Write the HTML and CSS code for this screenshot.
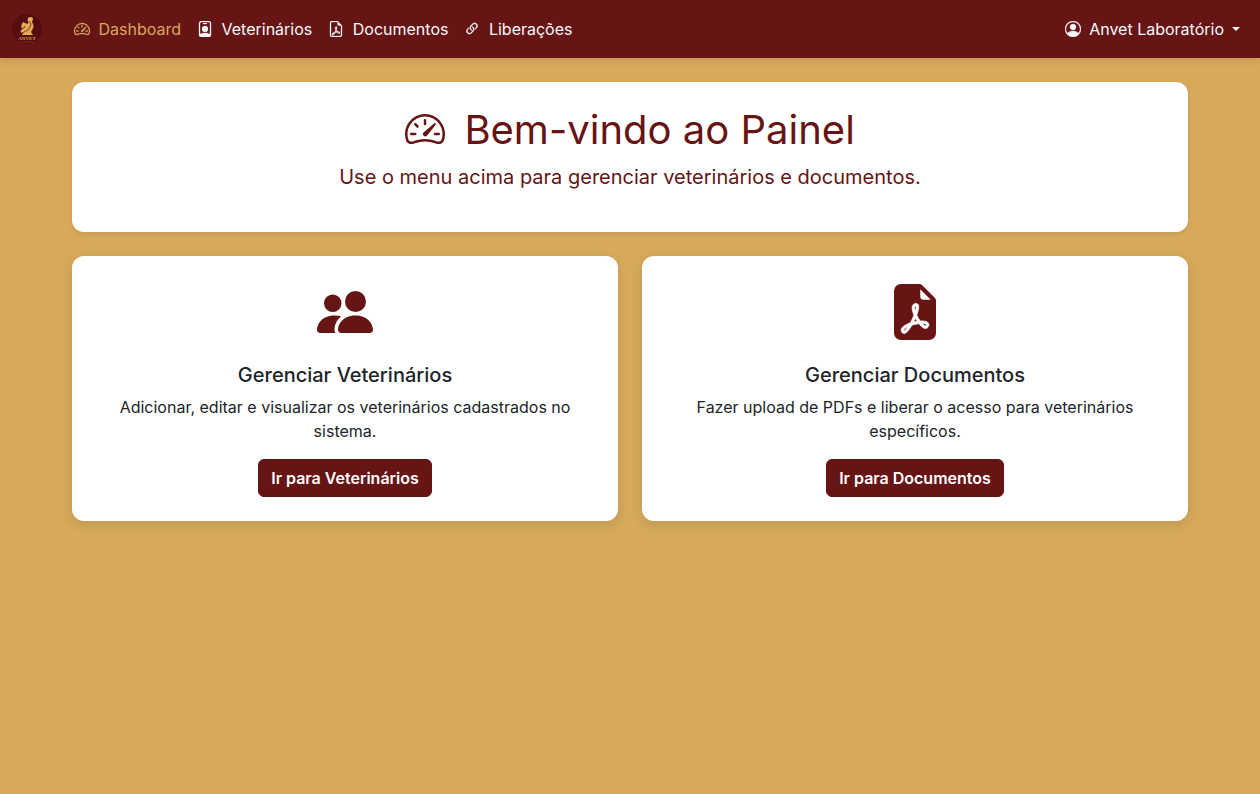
FILE: index.html
```
<!DOCTYPE html>
<html lang="pt-BR">
<head>
  <meta charset="UTF-8">
  <title>Painel – Anvet Laboratório</title>
  <meta name="viewport" content="width=device-width, initial-scale=1.0">
  <link rel="stylesheet" href="styles.css">
</head>
<body>

  <!-- icons -->
  <svg class="icon-defs" aria-hidden="true">
    <symbol id="speedometer" viewBox="0 0 16 16">
      <path d="M8 4a.5.5 0 0 1 .5.5V6a.5.5 0 0 1-1 0V4.5A.5.5 0 0 1 8 4M3.732 5.732a.5.5 0 0 1 .707 0l.915.914a.5.5 0 1 1-.708.708l-.914-.915a.5.5 0 0 1 0-.707M2 10a.5.5 0 0 1 .5-.5h1.586a.5.5 0 0 1 0 1H2.5A.5.5 0 0 1 2 10m9.5 0a.5.5 0 0 1 .5-.5h1.5a.5.5 0 0 1 0 1H12a.5.5 0 0 1-.5-.5m.754-4.246a.39.39 0 0 0-.527-.02L7.547 9.31a.91.91 0 1 0 1.302 1.258l3.434-4.297a.39.39 0 0 0-.029-.518z"/>
      <path fill-rule="evenodd" d="M0 10a8 8 0 1 1 15.547 2.661c-.442 1.253-1.845 1.602-2.932 1.25C11.309 13.488 9.475 13 8 13c-1.474 0-3.31.488-4.615.911-1.087.352-2.49.003-2.932-1.25A8 8 0 0 1 0 10m8-7a7 7 0 0 0-6.603 9.329c.203.575.923.876 1.68.63C4.397 12.533 6.358 12 8 12s3.604.532 4.923.96c.757.245 1.477-.056 1.68-.631A7 7 0 0 0 8 3"/>
    </symbol>
    <symbol id="badge" viewBox="0 0 16 16">
      <path d="M6.5 2a.5.5 0 0 0 0 1h3a.5.5 0 0 0 0-1zM11 8a3 3 0 1 1-6 0 3 3 0 0 1 6 0"/>
      <path d="M4.5 0A2.5 2.5 0 0 0 2 2.5V14a2 2 0 0 0 2 2h8a2 2 0 0 0 2-2V2.5A2.5 2.5 0 0 0 11.5 0zM3 2.5A1.5 1.5 0 0 1 4.5 1h7A1.5 1.5 0 0 1 13 2.5v10.795a4.2 4.2 0 0 0-.776-.492C11.392 12.387 10.063 12 8 12s-3.392.387-4.224.803a4.2 4.2 0 0 0-.776.492z"/>
    </symbol>
    <symbol id="pdf-mark" viewBox="0 0 16 16">
      <path d="M4.603 14.087a.8.8 0 0 1-.438-.42c-.195-.388-.13-.776.08-1.102.198-.307.526-.568.897-.787a7.7 7.7 0 0 1 1.482-.645 20 20 0 0 0 1.062-2.227 7.3 7.3 0 0 1-.43-1.295c-.086-.4-.119-.796-.046-1.136.075-.354.274-.672.65-.823.192-.077.4-.12.602-.077a.7.7 0 0 1 .477.365c.088.164.12.356.127.538.007.188-.012.396-.047.614-.084.51-.27 1.134-.52 1.794a11 11 0 0 0 .98 1.686 5.8 5.8 0 0 1 1.334.05c.364.066.734.195.96.465.12.144.193.32.2.518.007.192-.047.382-.138.563a1.04 1.04 0 0 1-.354.416.86.86 0 0 1-.51.138c-.331-.014-.654-.196-.933-.417a5.7 5.7 0 0 1-.911-.95 11.7 11.7 0 0 0-1.997.406 11.3 11.3 0 0 1-1.02 1.51c-.292.35-.609.656-.927.787a.8.8 0 0 1-.58.029m1.379-1.901q-.25.115-.459.238c-.328.194-.541.383-.647.547-.094.145-.096.25-.04.361q.016.032.026.044l.035-.012c.137-.056.355-.235.635-.572a8 8 0 0 0 .45-.606m1.64-1.33a13 13 0 0 1 1.01-.193 12 12 0 0 1-.51-.858 21 21 0 0 1-.5 1.05zm2.446.45q.226.245.435.41c.24.19.407.253.498.256a.1.1 0 0 0 .07-.015.3.3 0 0 0 .094-.125.44.44 0 0 0 .059-.2.1.1 0 0 0-.026-.063c-.052-.062-.2-.152-.518-.209a4 4 0 0 0-.612-.053zM8.078 7.8a7 7 0 0 0 .2-.828q.046-.282.038-.465a.6.6 0 0 0-.032-.198.5.5 0 0 0-.145.04c-.087.035-.158.106-.196.283-.04.192-.03.469.046.822q.036.167.09.346z"/>
    </symbol>
    <symbol id="file-pdf" viewBox="0 0 16 16">
      <path d="M14 14V4.5L9.5 0H4a2 2 0 0 0-2 2v12a2 2 0 0 0 2 2h8a2 2 0 0 0 2-2M9.5 3A1.5 1.5 0 0 0 11 4.5h2V14a1 1 0 0 1-1 1H4a1 1 0 0 1-1-1V2a1 1 0 0 1 1-1h5.5z"/>
      <use href="#pdf-mark"/>
    </symbol>
    <symbol id="file-pdf-fill" viewBox="0 0 16 16">
      <path fill-rule="evenodd" d="M4 0h5.293A1 1 0 0 1 10 .293L13.707 4a1 1 0 0 1 .293.707V14a2 2 0 0 1-2 2H4a2 2 0 0 1-2-2V2a2 2 0 0 1 2-2m5.5 1.500v2a1 1 0 0 0 1 1h2z"/>
      <use href="#pdf-mark" fill="#fff" stroke="#fff" stroke-width=".2"/>
    </symbol>
    <symbol id="link" viewBox="0 0 16 16">
      <path d="M4.715 6.542 3.343 7.914a3 3 0 1 0 4.243 4.243l1.828-1.829A3 3 0 0 0 8.586 5.500L8 6.086a1 1 0 0 0-.154.199 2 2 0 0 1 .861 3.337L6.88 11.450a2 2 0 1 1-2.830-2.830l.793-.792a4 4 0 0 1-.128-1.287z"/>
      <path d="M6.586 4.672A3 3 0 0 0 7.414 9.500l.775-.776a2 2 0 0 1-.896-3.346L9.120 3.550a2 2 0 1 1 2.830 2.830l-.793.792c.112.420.155.855.128 1.287l1.372-1.372a3 3 0 1 0-4.243-4.243z"/>
    </symbol>
    <symbol id="person" viewBox="0 0 16 16">
      <path d="M11 6a3 3 0 1 1-6 0 3 3 0 0 1 6 0"/>
      <path fill-rule="evenodd" d="M0 8a8 8 0 1 1 16 0A8 8 0 0 1 0 8m8-7a7 7 0 0 0-5.468 11.370C3.242 11.226 4.805 10 8 10s4.757 1.225 5.468 2.370A7 7 0 0 0 8 1"/>
    </symbol>
    <symbol id="people" viewBox="0 0 16 16">
      <path d="M7 14s-1 0-1-1 1-4 5-4 5 3 5 4-1 1-1 1zm4-6a3 3 0 1 0 0-6 3 3 0 0 0 0 6m-5.784 6A2.240 2.240 0 0 1 5 13c0-1.355.68-2.750 1.936-3.720A6.300 6.300 0 0 0 5 9c-4 0-5 3-5 4s1 1 1 1zM4.500 8a2.500 2.500 0 1 0 0-5 2.500 2.500 0 0 0 0 5"/>
    </symbol>
  </svg>

  <nav class="navbar">
    <a class="brand" href="#" aria-label="Anvet">
      <svg class="logo" viewBox="0 0 30 30">
        <circle cx="15" cy="15" r="15" fill="#560d12"/>
        <path fill="#e3ac55" d="M16 4c2-2 5-1 5 1 0 1-1 2-1 3 2 3 2 6 0 8l-1 2 2 3H10v-1l2-1-1-1-2 1c-1-2 0-3 1-4-1-2-1-4 0-5l1-2 2 1 3 1c1-2-1-3 0-6z"/>
        <path fill="none" stroke="#560d12" stroke-width=".7" d="M9 15l3-1 1-2M12 18l4-2 2-3M17 7l2 3-1 3"/>
        <text x="15" y="26" text-anchor="middle" font-size="5" font-weight="700" fill="#dca552">ANVET</text>
        <path stroke="#a2673a" stroke-width=".4" d="M8 28h14"/>
      </svg>
    </a>
    <div class="nav-links">
      <a class="nav-link active" href="#"><svg class="icon"><use href="#speedometer"/></svg> Dashboard</a>
      <a class="nav-link" href="#"><svg class="icon"><use href="#badge"/></svg> Veterinários</a>
      <a class="nav-link" href="#"><svg class="icon"><use href="#file-pdf"/></svg> Documentos</a>
      <a class="nav-link" href="#"><svg class="icon"><use href="#link"/></svg> Liberações</a>
    </div>
    <button class="nav-link user-menu" type="button"><svg class="icon"><use href="#person"/></svg> Anvet Laboratório<span class="caret"></span></button>
  </nav>

  <main class="container">
    <section class="card welcome">
      <h1><svg class="icon"><use href="#speedometer"/></svg> Bem-vindo ao Painel</h1>
      <p>Use o menu acima para gerenciar veterinários e documentos.</p>
    </section>

    <div class="card-row">
      <section class="card">
        <svg class="card-icon"><use href="#people"/></svg>
        <h2>Gerenciar Veterinários</h2>
        <p>Adicionar, editar e visualizar os veterinários cadastrados no sistema.</p>
        <a class="btn" href="#">Ir para Veterinários</a>
      </section>
      <section class="card">
        <svg class="card-icon"><use href="#file-pdf-fill"/></svg>
        <h2>Gerenciar Documentos</h2>
        <p>Fazer upload de PDFs e liberar o acesso para veterinários específicos.</p>
        <a class="btn" href="#">Ir para Documentos</a>
      </section>
    </div>
  </main>

</body>
</html>
```
FILE: styles.css
```
* {
  box-sizing: border-box;
}

body {
  font-family: 'Inter', sans-serif;
  font-size: 16px;
  line-height: 24px;
  margin: 0;
  background: #d6a95b;
  color: #212529;
}

.icon-defs {
  display: none;
}

.icon {
  width: 1em;
  height: 1em;
  fill: currentColor;
  vertical-align: -0.125em;
  margin-right: 4px;
}

.navbar {
  background: #661414;
  display: flex;
  align-items: center;
  padding: 9px 12px;
  box-shadow: 0 2px 8px rgba(0, 0, 0, 0.1);
}

.brand {
  display: flex;
  margin-right: 24px;
}

.logo {
  width: 30px;
  height: 30px;
  font-family: 'Liberation Serif', serif;
}

.nav-links {
  display: flex;
  flex: 1;
}

.nav-link {
  padding: 8px;
  font: inherit;
  color: #f8f9fa;
  text-decoration: none;
  white-space: nowrap;
}

.nav-link .icon {
  stroke: currentColor;
  stroke-width: 0.3px;
}

.nav-link.active {
  color: #d6a95b;
}

.user-menu {
  background: none;
  border: none;
  cursor: pointer;
}

.caret {
  display: inline-block;
  margin-left: 8px;
  vertical-align: 4px;
  border-top: 4px solid;
  border-left: 4px solid transparent;
  border-right: 4px solid transparent;
}

.container {
  max-width: 1140px;
  margin: 0 auto;
  padding: 24px 12px;
}

.card {
  background: #fff;
  border-radius: 12px;
  padding: 24px;
  text-align: center;
  box-shadow: 0 4px 12px rgba(0, 0, 0, 0.1);
}

.card p {
  margin: 0 0 16px;
}

.welcome {
  color: #661414;
  margin-bottom: 24px;
  box-shadow: 0 2px 4px rgba(0, 0, 0, 0.08);
}

.welcome h1 {
  margin: 0 0 8px;
  font-size: 40px;
  font-weight: 400;
  line-height: 48px;
}

.welcome h1 .icon {
  margin-right: 8px;
}

.welcome p {
  font-size: 20px;
  line-height: 30px;
}

.card-row {
  display: grid;
  grid-template-columns: 1fr 1fr;
  gap: 24px;
}

.card-icon {
  display: block;
  width: 56px;
  height: 56px;
  margin: 4px auto 23px;
  fill: #661414;
}

.card h2 {
  margin: 0 0 8px;
  font-size: 20px;
  font-weight: 500;
  line-height: 24px;
}

.btn {
  display: inline-block;
  background: #661414;
  color: #fff;
  border: 1px solid #661414;
  border-radius: 6px;
  padding: 6px 12px;
  font-weight: 600;
  text-decoration: none;
  vertical-align: middle;
}

.btn:hover {
  background: #4d0f0f;
}

@media (max-width: 768px) {
  .navbar {
    flex-wrap: wrap;
  }

  .nav-links {
    flex-wrap: wrap;
  }

  .card-row {
    grid-template-columns: 1fr;
  }
}
```
